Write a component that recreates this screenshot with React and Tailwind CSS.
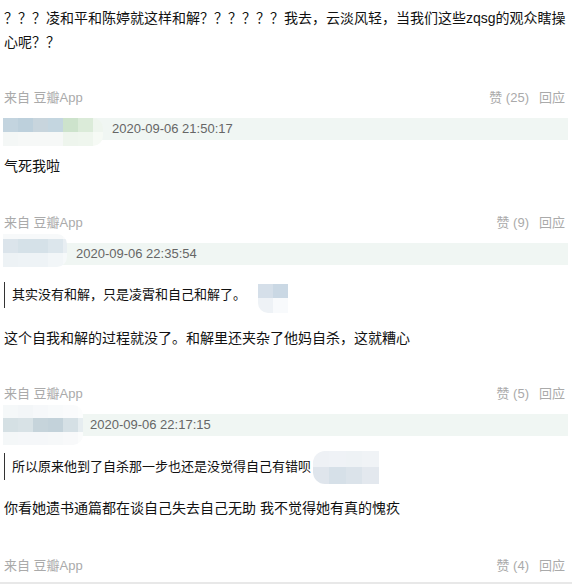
import React from "react";

const FONT = { fontFamily: '"Liberation Sans", "Noto Sans CJK SC", sans-serif' };

function Mosaic({ rows, heights, widths, className = "" }) {
  return (
    <div className={"flex flex-col shrink-0 overflow-hidden " + className}>
      {rows.map((row, i) => (
        <div key={i} className="flex" style={{ height: heights[i] }}>
          {row.map((c, j) => (
            <div key={j} style={{ width: widths[j], background: c }} />
          ))}
        </div>
      ))}
    </div>
  );
}

function Meta({ likes, className = "" }) {
  return (
    <div className={"flex justify-between items-center h-5 text-[13px] text-[#aaaaaa] " + className}>
      <span>来自 豆瓣App</span>
      <span className="flex gap-[10px] pr-[3px]">
        <span>赞 ({likes})</span>
        <span>回应</span>
      </span>
    </div>
  );
}

function Bar({ mosaic, date, dateMl, className = "" }) {
  return (
    <div className={"flex items-start h-[22px] bg-[#f0f6f3] " + className}>
      {mosaic}
      <span className={"self-center text-[13px] leading-[22px] text-[#666666] " + dateMl}>{date}</span>
    </div>
  );
}

export default function App() {
  return (
    <div className="w-[572px] h-[584px] bg-white overflow-hidden px-1 text-[#111111]" style={FONT}>
      <p className="pt-[6px] text-[14px] leading-6">
        ？？？凌和平和陈婷就这样和解？？？？？？我去，云淡风轻，当我们这些zqsg的观众瞎操心呢？？
      </p>
      <Meta likes={25} className="mt-[34px]" />

      <Bar
        className="mt-[10px]"
        mosaic={
          <Mosaic
            className="-ml-px rounded-r-[10px]"
            heights={[14, 14]}
            widths={[15, 15, 15, 15, 15, 15, 10]}
            rows={[
              ["#c3d4df", "#bdd0dc", "#c8d5dd", "#c4d6e0", "#cde3cc", "#dbebd9", "#eef5ee"],
              ["#f4f7f6", "#f6f8f7", "#f6f8f7", "#f6f8f7", "#eef5ed", "#eff6ee", "#f6faf5"],
            ]}
          />
        }
        date="2020-09-06 21:50:17"
        dateMl="ml-[9px]"
      />
      <p className="mt-[14px] text-[14px] leading-6">气死我啦</p>
      <Meta likes={9} className="mt-[35px]" />

      <Bar
        className="mt-[10px]"
        mosaic={
          <Mosaic
            className="-ml-px -mt-[9px] rounded-r-[10px]"
            heights={[5, 14, 14]}
            widths={[15, 15, 15, 15, 4]}
            rows={[
              ["#f7f9fa", "#f7f9fa", "#f7f9fa", "#f7f9fa", "#fafbfc"],
              ["#dbe4eb", "#d5e1e8", "#d5e1e8", "#dce6ec", "#e8eef2"],
              ["#edf2f5", "#eef3f6", "#eef3f6", "#f2f6f8", "#f6f9fa"],
            ]}
          />
        }
        date="2020-09-06 22:35:54"
        dateMl="ml-[9px]"
      />
      <div className="mt-[17px] flex items-start">
        <div className="border-l border-[#333333] pl-[7px] h-[26px] leading-[26px] text-[13px]">
          其实没有和解，只是凌霄和自己和解了。
        </div>
        <Mosaic
          className="ml-[12px] mt-[2px] rounded-bl-[10px]"
          heights={[14, 15]}
          widths={[15, 15]}
          rows={[
            ["#d5dfe9", "#cad8e4"],
            ["#eef2f6", "#f8fafc"],
          ]}
        />
      </div>
      <p className="mt-[13px] text-[14px] leading-6">
        这个自我和解的过程就没了。和解里还夹杂了他妈自杀，这就糟心
      </p>
      <Meta likes={5} className="mt-[34px]" />

      <Bar
        className="mt-[10px]"
        mosaic={
          <Mosaic
            className="-ml-px -mt-[9px] rounded-r-[10px]"
            heights={[13, 14, 13]}
            widths={[15, 15, 15, 15, 15, 5]}
            rows={[
              ["#f5f8f9", "#f3f6f8", "#f6f8fa", "#f8fafb", "#fafbfc", "#fcfdfd"],
              ["#d5e0e4", "#d8e2e6", "#c6d4db", "#c3d2da", "#d5e0e5", "#e6edf0"],
              ["#f4f7f8", "#f5f7f9", "#f5f7f9", "#f6f8f9", "#f8f9fa", "#fbfcfc"],
            ]}
          />
        }
        date="2020-09-06 22:17:15"
        dateMl="ml-[7px]"
      />
      <div className="mt-[15px] flex items-start">
        <div className="mt-[2px] border-l border-[#333333] pl-[7px] h-[27px] leading-[27px] text-[13px]">
          所以原来他到了自杀那一步也还是没觉得自己有错呗
        </div>
        <Mosaic
          className="ml-[2px] rounded-l-[12px]"
          heights={[16, 17]}
          widths={[16, 17, 16, 17]}
          rows={[
            ["#eef1f5", "#eff2f6", "#eef2f5", "#f0f3f6"],
            ["#dfe5ec", "#d6e0e8", "#dbe3ea", "#e3e8ee"],
          ]}
        />
      </div>
      <p className="mt-[12px] text-[14px] leading-6">
        你看她遗书通篇都在谈自己失去自己无助 我不觉得她有真的愧疚
      </p>
      <Meta likes={4} className="mt-[36px]" />
      <div className="mt-[6px] -mx-1 h-[2px] bg-[#e8e8e8]" />
    </div>
  );
}
